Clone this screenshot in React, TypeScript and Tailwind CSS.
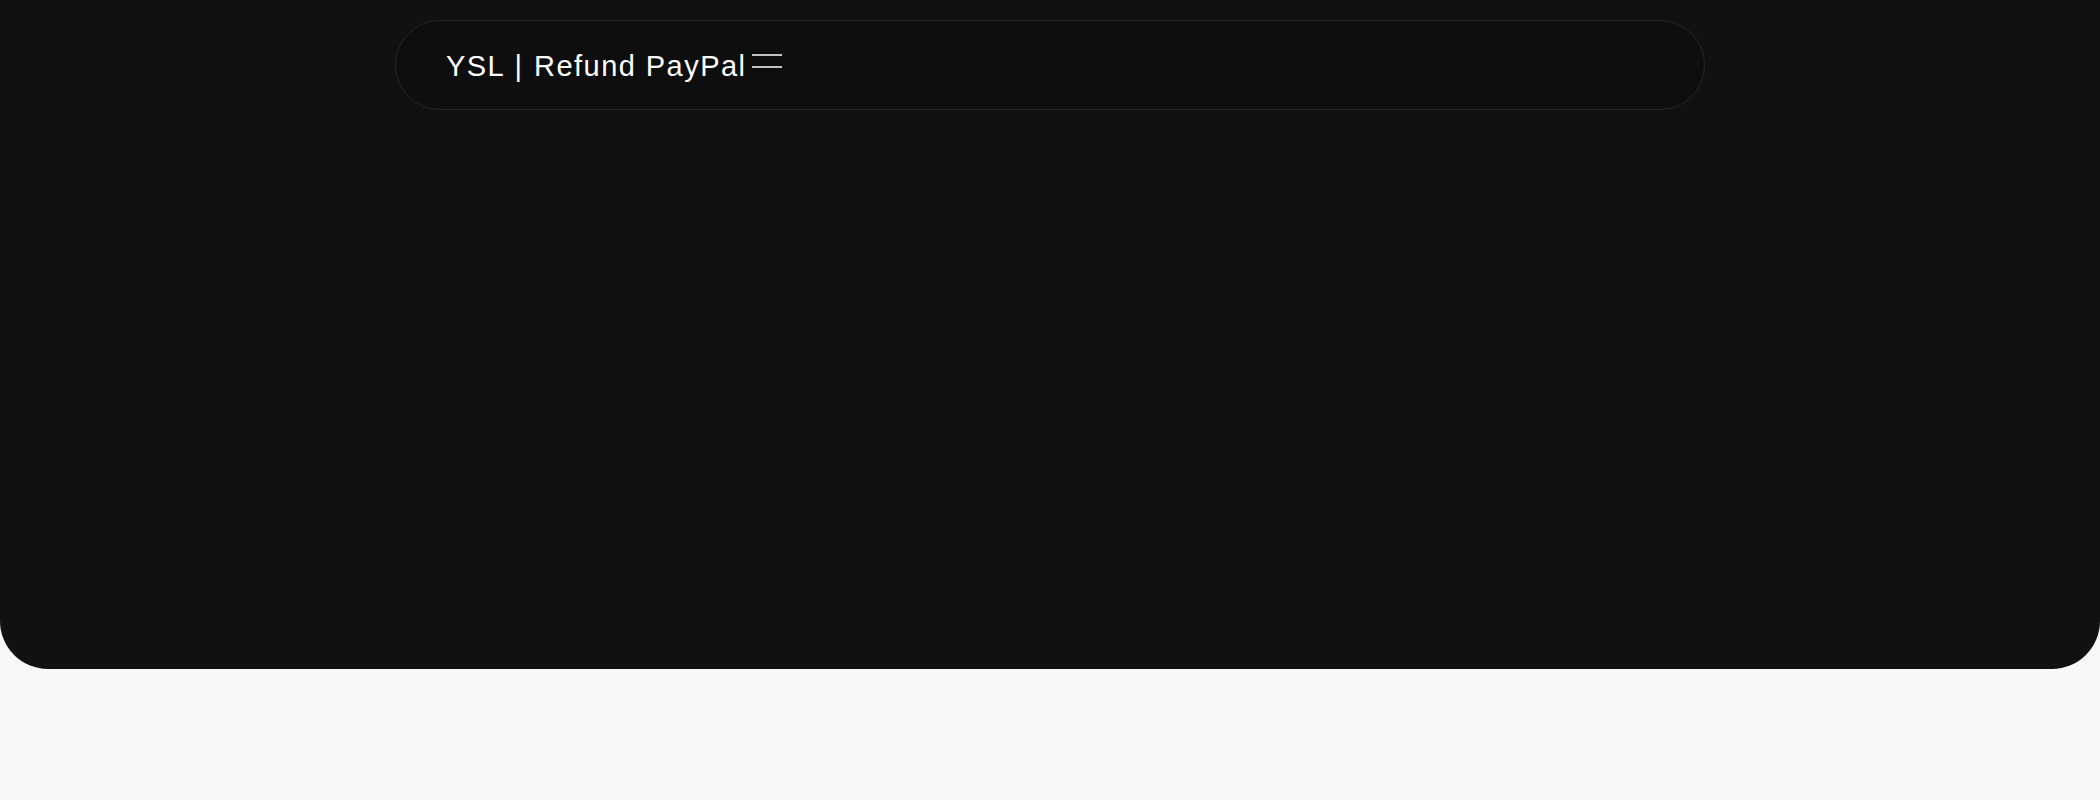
import { ReactNode } from 'react';

const MenuLines = () => (
  <svg width="30" height="14" viewBox="0 0 30 14" fill="none" className="shrink-0">
    <line x1="0" y1="1" x2="30" y2="1" stroke="#ffffff" strokeWidth="1.5" />
    <line x1="0" y1="13" x2="30" y2="13" stroke="#ffffff" strokeWidth="1.5" />
  </svg>
);

const NavPill = ({ children }: { children: ReactNode }) => (
  <nav className="w-[1310px] h-[90px] rounded-full border border-[#262626] bg-[#0e0e0e] flex items-center pl-[50px]">
    {children}
  </nav>
);

export default function App() {
  return (
    <div className="min-h-screen bg-[#f7f8fa] font-['Liberation_Sans',Arial,sans-serif]">
      {/* hero shell */}
      <header className="h-[669px] bg-[#111111] rounded-b-[48px] pt-5 flex justify-center items-start">
        <NavPill>
          <a href="#" className="flex items-start gap-[6px] text-white mt-[2px]">
            <span className="text-[29px] leading-[34px] tracking-[0.05em]">
              YSL <span className="mx-[1px]">|</span> Refund PayPal
            </span>
            <span className="mt-[5px]">
              <MenuLines />
            </span>
          </a>
        </NavPill>
      </header>
    </div>
  );
}
